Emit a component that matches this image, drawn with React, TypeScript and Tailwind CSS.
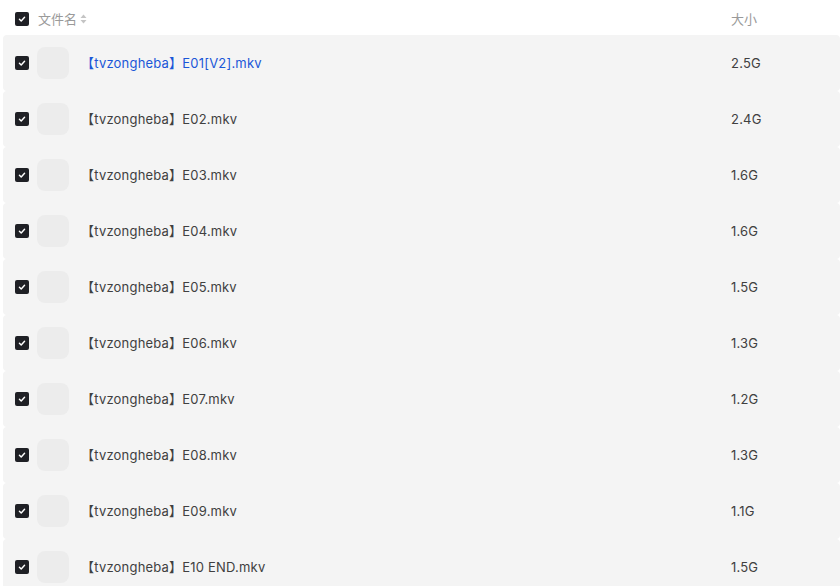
const files = [
  { name: '【tvzongheba】E01[V2].mkv', size: '2.5G', active: true },
  { name: '【tvzongheba】E02.mkv', size: '2.4G' },
  { name: '【tvzongheba】E03.mkv', size: '1.6G' },
  { name: '【tvzongheba】E04.mkv', size: '1.6G' },
  { name: '【tvzongheba】E05.mkv', size: '1.5G' },
  { name: '【tvzongheba】E06.mkv', size: '1.3G' },
  { name: '【tvzongheba】E07.mkv', size: '1.2G' },
  { name: '【tvzongheba】E08.mkv', size: '1.3G' },
  { name: '【tvzongheba】E09.mkv', size: '1.1G' },
  { name: '【tvzongheba】E10 END.mkv', size: '1.5G' },
];

function Check() {
  return (
    <span className="flex h-[14px] w-[14px] shrink-0 items-center justify-center rounded-[2px] bg-[#1f2025]">
      <svg width="8" height="8" viewBox="0 0 10 10" fill="none">
        <path d="M1.8 5.2l2.2 2.2 4.2-4.6" stroke="#fff" strokeWidth="1.8" strokeLinecap="round" strokeLinejoin="round" />
      </svg>
    </span>
  );
}

function SortIcon() {
  return (
    <svg width="7" height="10" viewBox="0 0 7 10" className="ml-[3px]">
      <path d="M3.5 0.5L6.5 4H0.5z" fill="#c4c4c4" />
      <path d="M3.5 9.5L6.5 6H0.5z" fill="#c4c4c4" />
    </svg>
  );
}

export default function App() {
  return (
    <div
      className="h-[586px] w-[840px] overflow-hidden bg-white text-[13px] leading-[18px]"
      style={{ fontFamily: 'Inter, "Noto Sans CJK SC", sans-serif' }}
    >
      {/* header */}
      <div className="flex h-[35px] items-center pl-[15px] pt-[2px]">
        <Check />
        <div className="ml-[9px] flex items-center text-[#9a9a9a]">
          文件名
          <SortIcon />
        </div>
        <div className="ml-auto w-[109px] text-[#9a9a9a]">大小</div>
      </div>

      {/* rows */}
      <div className="ml-[3px]">
        {files.map((f) => (
          <div
            key={f.name}
            className="flex h-[56px] items-center rounded-[4px] bg-[#f4f4f4] pl-[12px]"
          >
            <Check />
            <div className="ml-[8px] h-[32px] w-[32px] shrink-0 rounded-[8px] bg-[#ececec]" />
            <div
              className={`ml-[12px] tracking-[0.2px] ${f.active ? 'text-[#1b57d8]' : 'text-[#404040]'}`}
            >
              {f.name}
            </div>
            <div className="ml-auto w-[109px] tracking-[0.2px] text-[#404040]">{f.size}</div>
          </div>
        ))}
      </div>
    </div>
  );
}
